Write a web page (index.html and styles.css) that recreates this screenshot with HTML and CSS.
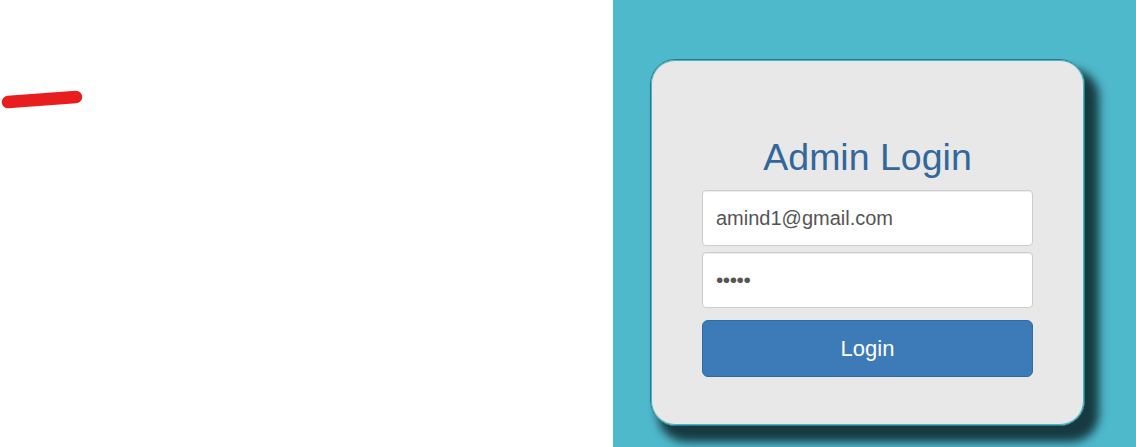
FILE: index.html
```html
<!DOCTYPE html>
<html>
<head>
<meta charset="utf-8">
<link rel="stylesheet" href="styles.css">
</head>
<body>
<div class="page">
  <div class="left">
    <svg class="mark" width="90" height="24" viewBox="0 0 90 24">
      <line x1="8" y1="15" x2="76" y2="10" stroke="#e81e1e" stroke-width="12.5" stroke-linecap="round"/>
    </svg>
  </div>
  <div class="right">
    <div class="card">
      <h1 class="title">Admin Login</h1>
      <div class="field">amind1@gmail.com</div>
      <div class="field dots">•••••</div>
      <div class="btn">Login</div>
    </div>
  </div>
</div>
</body>
</html>
```
FILE: styles.css
```css
html, body { margin: 0; padding: 0; }
body { font-family: "Liberation Sans", Arial, sans-serif; overflow: hidden; }
.page { display: flex; width: 1136px; height: 447px; }
.left { width: 613px; background: #fff; }
.mark { display: block; margin: 87px 0 0 0; }
.right { flex: 1; background: #4fb9cc; padding: 59px 0 0 37px; overflow: hidden; }
.card {
  width: 331px;
  padding: 77px 51px 48px 51px;
  background: #e8e8e8;
  border: 1px solid #237e8c;
  border-radius: 25px;
  box-shadow: inset 0 0 0 1px #4cb3c3, 11px 13px 10px 3px #173a41;
}
.title {
  margin: 0 0 13px 0;
  font-weight: normal;
  font-size: 37.5px;
  line-height: 40px;
  color: #32679c;
  text-align: center;
}
.field {
  box-sizing: border-box;
  height: 56px;
  margin-bottom: 6px;
  background: #fff;
  border: 1px solid #cccccc;
  border-radius: 4px;
  padding: 0 13px;
  font-size: 20px;
  line-height: 54px;
  color: #555;
  box-shadow: inset 0 1px 1px rgba(0,0,0,0.075);
}
.dots { font-size: 21px; letter-spacing: -0.5px; }
.btn {
  box-sizing: border-box;
  height: 57px;
  margin-top: 12px;
  background: #3d7ab8;
  border: 1px solid #2e6da4;
  border-radius: 6px;
  color: #fff;
  font-size: 22px;
  line-height: 55px;
  text-align: center;
}
```
